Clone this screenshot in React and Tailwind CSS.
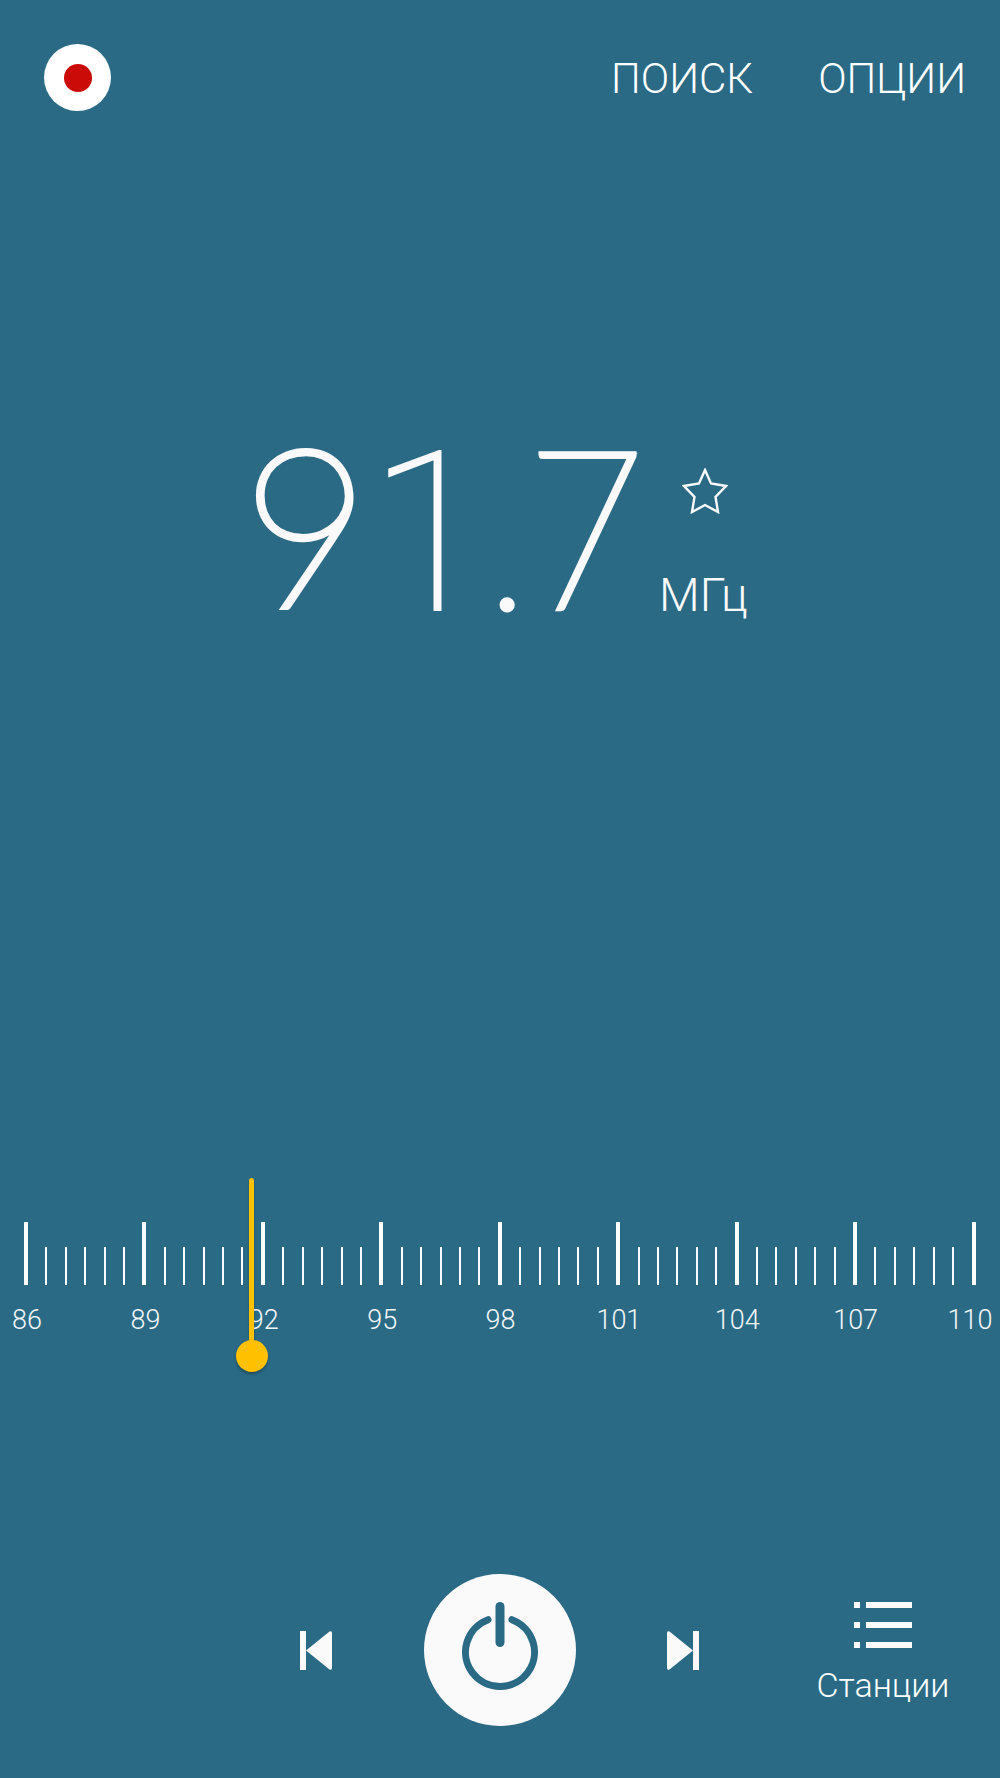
const ROBOTO = { fontFamily: "Roboto, sans-serif" };

const LABELS = [86, 89, 92, 95, 98, 101, 104, 107, 110];

// 48 intervals on the scale, every sixth tick is a long one
const TICKS = Array.from({ length: 49 }, (_, i) => i % 6 === 0);

const RecordButton = () => (
  <div className="w-[67px] h-[67px] rounded-full bg-white flex items-center justify-center">
    <div className="w-[28px] h-[28px] rounded-full bg-[#cb0b08]" />
  </div>
);

const Frequency = () => (
  <div className="flex items-start pl-[242px] mt-[314px] h-[200px] text-[#fafafa]">
    <div className="w-[419px] flex items-baseline leading-[200px]">
      <span className="w-[127px] text-[220px] font-extralight font-['Lato'] -translate-y-[2px] [-webkit-text-stroke:6px_#fafafa]">9</span>
      <span className="w-[116px] text-[222px] font-thin tracking-[-9px] [-webkit-text-stroke:2px_#fafafa]">1</span>
      <span className="w-[42px] text-[224px] font-thin [-webkit-text-stroke:3px_#fafafa]">.</span>
      <span className="w-[134px] text-[220px] font-extralight font-['Lato'] origin-left scale-x-[0.92] -translate-y-[2px] [-webkit-text-stroke:6px_#fafafa]">7</span>
    </div>
    <div className="flex flex-col">
      <svg viewBox="0 0 46 46" className="w-[46px] h-[46px] ml-[21px] mt-[43px]" fill="none" stroke="#fafafa" strokeWidth="2.4">
        <path d="M23 2 L29 15.5 L44 18 L33.5 29 L36 44 L23 37 L10 44 L12.5 29 L2 18 L17 15.5 Z" />
      </svg>
      <span className="text-[47px] leading-[54px] font-light mt-[54px] -ml-[2px]">МГц</span>
    </div>
  </div>
);

const Tuner = () => (
  <div className="relative mt-[597px] px-[24px]">
    <div className="flex justify-between items-end h-[63px]">
      {TICKS.map((major, i) =>
        major ? (
          <div key={i} className="w-[4px] h-[63px] bg-white" />
        ) : (
          <div key={i} className="w-[2px] h-[38px] bg-white" />
        )
      )}
    </div>
    <div className="flex justify-between mt-[19px] pl-[3px] pr-[2px] text-[27px] leading-[32px] font-light text-[#f4f7f8]">
      {LABELS.map((label) => (
        <div key={label} className={label === 110 ? "w-0 flex justify-center -translate-x-[4px]" : "w-0 flex justify-center"}>
          <span>{label}</span>
        </div>
      ))}
    </div>
    {/* needle sits over the scale */}
    <div className="absolute left-[249px] top-[-44px] w-[5px] h-[170px] rounded-full bg-[#ffc000] shadow-[0_1px_2px_rgba(0,0,0,0.25)]" />
    <div className="absolute left-[236px] top-[118px] w-[32px] h-[32px] rounded-full bg-[#ffc000] shadow-[0_2px_3px_rgba(0,0,0,0.3)]" />
  </div>
);

const PrevIcon = () => (
  <svg viewBox="0 0 32 39" className="w-[32px] h-[39px]" fill="#fafafa">
    <rect x="0" y="0" width="6" height="39" />
    <path d="M6 19.5 L29.5 0.6 Q32 -0.6 32 2 L32 37 Q32 39.6 29.5 38.4 Z" />
  </svg>
);

const NextIcon = () => (
  <svg viewBox="0 0 32 39" className="w-[32px] h-[39px]" fill="#fafafa">
    <rect x="26" y="0" width="6" height="39" />
    <path d="M26 19.5 L2.5 0.6 Q0 -0.6 0 2 L0 37 Q0 39.6 2.5 38.4 Z" />
  </svg>
);

const PowerButton = () => (
  <div className="w-[152px] h-[152px] rounded-full bg-[#fafafa] flex items-center justify-center">
    <svg viewBox="0 0 152 152" className="w-[152px] h-[152px]" fill="none" stroke="#2a6a85" strokeLinecap="round">
      <path d="M64 45.7 A34.5 34.5 0 1 0 88 45.7" strokeWidth="7" />
      <path d="M76 32.5 L76 68.5" strokeWidth="9" />
    </svg>
  </div>
);

const StationsIcon = () => (
  <svg viewBox="0 0 58 48" className="w-[58px] h-[48px]" fill="#ffffff">
    <rect x="0" y="0" width="6" height="6" />
    <rect x="12" y="0" width="46" height="6" />
    <rect x="0" y="20" width="6" height="6" />
    <rect x="12" y="20" width="46" height="6" />
    <rect x="0" y="40" width="6" height="6" />
    <rect x="12" y="40" width="46" height="6" />
  </svg>
);

export default function App() {
  return (
    <div className="w-[1000px] h-[1778px] bg-[#2a6a85] overflow-hidden" style={ROBOTO}>
      <div className="flex items-center justify-between pl-[44px] pr-[34px] pt-[44px] h-[111px] text-white">
        <RecordButton />
        <div className="flex gap-[65px] text-[42px] leading-[50px] font-[350] pt-[2px]">
          <span>ПОИСК</span>
          <span>ОПЦИИ</span>
        </div>
      </div>

      <Frequency />
      <Tuner />

      <div className="relative flex items-center justify-center pr-[1px] mt-[238px]">
        <div className="flex items-center">
          <PrevIcon />
          <div className="ml-[92px] mr-[91px]">
            <PowerButton />
          </div>
          <NextIcon />
        </div>
        <div className="absolute left-[816px] top-[28px] flex flex-col items-center w-[134px] text-white">
          <StationsIcon />
          <span className="text-[34px] leading-[38px] font-[350] mt-[16px]">Станции</span>
        </div>
      </div>
    </div>
  );
}
